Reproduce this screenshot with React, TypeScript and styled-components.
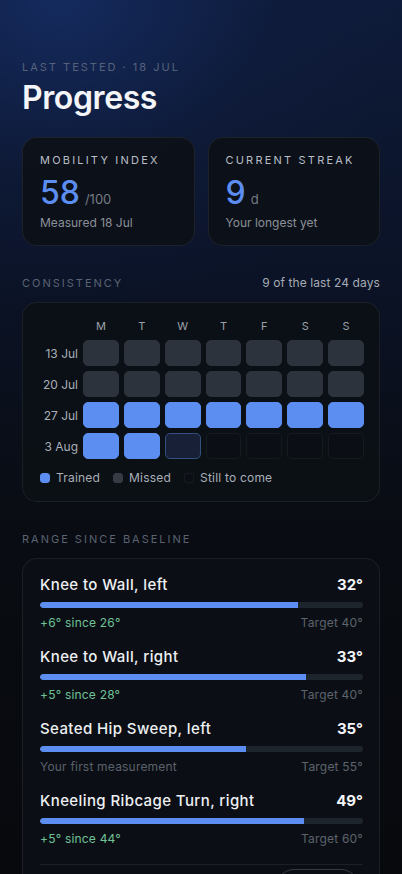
import styled, { createGlobalStyle } from "styled-components";

const GlobalStyle = createGlobalStyle`
  * { box-sizing: border-box; }
  body {
    margin: 0;
    background: #080b10;
    font-family: Inter, "Noto Sans", sans-serif;
    color: #eef0f3;
  }
`;

const Page = styled.div`
  height: 874px;
  padding: 60px 22px 0 22px;
  background:
    radial-gradient(ellipse 120% 45% at 15% 0%, rgba(22, 45, 100, 0.85) 0%, rgba(16, 30, 66, 0.4) 45%, rgba(10, 13, 20, 0) 80%),
    linear-gradient(180deg, #0d1a38 0%, #0b1224 35%, #090c12 60%, #07090d 100%);
  overflow: hidden;
`;

const Eyebrow = styled.div`
  font-size: 11px;
  line-height: 14px;
  letter-spacing: 2px;
  text-transform: uppercase;
  color: #56627c;
`;

const Title = styled.h1`
  margin: 4px 0 0 0;
  font-size: 32px;
  line-height: 40px;
  font-weight: 600;
  letter-spacing: -0.4px;
  color: #f3f5f8;
`;

const StatGrid = styled.div`
  display: grid;
  grid-template-columns: 1fr 1fr;
  gap: 13px;
  margin-top: 19px;
`;

const Card = styled.div`
  background: rgba(12, 16, 22, 0.88);
  border: 1px solid rgba(255, 255, 255, 0.07);
  border-radius: 15px;
`;

const StatCard = styled(Card)`
  padding: 15px 17px 16px 17px;
  height: 109px;
`;

const StatLabel = styled.div`
  font-size: 11px;
  line-height: 14px;
  letter-spacing: 2.2px;
  text-transform: uppercase;
  color: #b9bec6;
`;

const StatValueRow = styled.div`
  display: flex;
  align-items: baseline;
  margin-top: 8px;
  height: 36px;
`;

const StatValue = styled.span`
  font-size: 32px;
  line-height: 36px;
  font-weight: 500;
  color: #5b8ef0;
`;

const StatUnit = styled.span`
  font-size: 13px;
  margin-left: 5px;
  color: #757b85;
`;

const StatNote = styled.div`
  margin-top: 4px;
  font-size: 12px;
  line-height: 16px;
  color: #8a9099;
`;

const SectionHead = styled.div`
  display: flex;
  justify-content: space-between;
  align-items: center;
  margin-top: 30px;
  margin-bottom: 12px;
`;

const SectionLabel = styled.div`
  font-size: 11px;
  line-height: 14px;
  letter-spacing: 2px;
  text-transform: uppercase;
  color: #5a6372;
`;

const SectionMeta = styled.div`
  font-size: 12px;
  line-height: 14px;
  letter-spacing: 0.1px;
  color: #a6acb5;
`;

const CalendarCard = styled(Card)`
  background: rgba(12, 16, 22, 0.92);
  padding: 16px 15px 16px 17px;
`;

const CalGrid = styled.div`
  display: grid;
  grid-template-columns: 38px repeat(7, 1fr);
  column-gap: 5px;
  row-gap: 5px;
`;

const DayHead = styled.div`
  font-size: 11px;
  line-height: 14px;
  text-align: center;
  color: #9ca2aa;
  margin-bottom: 2px;
`;

const WeekLabel = styled.div`
  font-size: 12px;
  text-align: right;
  align-self: center;
  color: #a9afb8;
  white-space: nowrap;
`;

type CellState = "trained" | "missed" | "today" | "future";

const cellBg: Record<CellState, string> = {
  trained: "#5b8ef0",
  missed: "#2d333c",
  today: "#172036",
  future: "#0b0f15",
};

const cellBorder: Record<CellState, string> = {
  trained: "#5b8ef0",
  missed: "#2d333c",
  today: "#33507f",
  future: "rgba(255, 255, 255, 0.05)",
};

const Cell = styled.div<{ $state: CellState }>`
  height: 26px;
  border-radius: 5px;
  background: ${(p) => cellBg[p.$state]};
  border: 1px solid ${(p) => cellBorder[p.$state]};
`;

const Legend = styled.div`
  display: flex;
  align-items: center;
  gap: 13px;
  margin-top: 12px;
`;

const LegendItem = styled.div`
  display: flex;
  align-items: center;
  gap: 6px;
  font-size: 12px;
  line-height: 14px;
  letter-spacing: 0.2px;
  color: #a9afb8;
`;

const Swatch = styled.span<{ $state: CellState }>`
  width: 10px;
  height: 10px;
  border-radius: 3px;
  background: ${(p) => (p.$state === "missed" ? "#363b44" : cellBg[p.$state])};
  border: 1px solid ${(p) => (p.$state === "missed" ? "#363b44" : cellBorder[p.$state])};
`;

const RangeCard = styled(Card)`
  background: rgba(12, 16, 22, 0.95);
  padding: 16px 16px 0 17px;
`;

const RangeItem = styled.div`
  padding-bottom: 16px;
`;

const RangeTop = styled.div`
  display: flex;
  justify-content: space-between;
  align-items: center;
  font-size: 15px;
  line-height: 20px;
`;

const RangeName = styled.span`
  font-weight: 500;
  letter-spacing: 0.4px;
  color: #eef0f3;
`;

const RangeValue = styled.span`
  font-weight: 700;
  color: #f3f5f8;
`;

const Track = styled.div`
  margin-top: 7px;
  height: 6px;
  border-radius: 3px;
  background: #1e242c;
  overflow: hidden;
`;

const Fill = styled.div`
  height: 100%;
  border-radius: 3px 0 0 3px;
  background: #5b8ef0;
`;

const RangeBottom = styled.div`
  display: flex;
  justify-content: space-between;
  margin-top: 7px;
  font-size: 12px;
  line-height: 16px;
  letter-spacing: 0.2px;
`;

const Delta = styled.span<{ $first?: boolean }>`
  color: ${(p) => (p.$first ? "#5b616b" : "#70c196")};
`;

const TargetText = styled.span`
  color: #5d636c;
`;

const Footer = styled.div`
  display: flex;
  justify-content: flex-end;
  border-top: 1px solid rgba(255, 255, 255, 0.07);
  margin-top: 1px;
  padding: 4px 4px 14px 0;
`;

const GhostButton = styled.button`
  font-family: inherit;
  font-size: 12px;
  line-height: 14px;
  padding: 22px 0 0 0;
  color: #c9cdd3;
  background: transparent;
  border: 1px solid rgba(255, 255, 255, 0.18);
  border-radius: 18px;
  height: 44px;
  width: 83px;
`;

const days = ["M", "T", "W", "T", "F", "S", "S"];

const weeks: { label: string; cells: CellState[] }[] = [
  { label: "13 Jul", cells: Array(7).fill("missed") },
  { label: "20 Jul", cells: Array(7).fill("missed") },
  { label: "27 Jul", cells: Array(7).fill("trained") },
  { label: "3 Aug", cells: ["trained", "trained", "today", "future", "future", "future", "future"] },
];

const ranges = [
  { name: "Knee to Wall, left", value: 32, target: 40, delta: "+6° since 26°" },
  { name: "Knee to Wall, right", value: 33, target: 40, delta: "+5° since 28°" },
  { name: "Seated Hip Sweep, left", value: 35, target: 55, delta: null },
  { name: "Kneeling Ribcage Turn, right", value: 49, target: 60, delta: "+5° since 44°" },
];

export default function App() {
  return (
    <Page>
      <GlobalStyle />
      <Eyebrow>Last tested · 18 Jul</Eyebrow>
      <Title>Progress</Title>

      <StatGrid>
        <StatCard>
          <StatLabel>Mobility index</StatLabel>
          <StatValueRow>
            <StatValue>58</StatValue>
            <StatUnit>/100</StatUnit>
          </StatValueRow>
          <StatNote>Measured 18 Jul</StatNote>
        </StatCard>
        <StatCard>
          <StatLabel>Current streak</StatLabel>
          <StatValueRow>
            <StatValue>9</StatValue>
            <StatUnit>d</StatUnit>
          </StatValueRow>
          <StatNote>Your longest yet</StatNote>
        </StatCard>
      </StatGrid>

      <SectionHead>
        <SectionLabel>Consistency</SectionLabel>
        <SectionMeta>9 of the last 24 days</SectionMeta>
      </SectionHead>
      <CalendarCard>
        <CalGrid>
          <span />
          {days.map((d, i) => (
            <DayHead key={i}>{d}</DayHead>
          ))}
          {weeks.map((w) => [
            <WeekLabel key={w.label}>{w.label}</WeekLabel>,
            ...w.cells.map((c, i) => <Cell key={w.label + i} $state={c} />),
          ])}
        </CalGrid>
        <Legend>
          <LegendItem>
            <Swatch $state="trained" />
            Trained
          </LegendItem>
          <LegendItem>
            <Swatch $state="missed" />
            Missed
          </LegendItem>
          <LegendItem>
            <Swatch $state="future" />
            Still to come
          </LegendItem>
        </Legend>
      </CalendarCard>

      <SectionHead>
        <SectionLabel>Range since baseline</SectionLabel>
      </SectionHead>
      <RangeCard>
        {ranges.map((r) => (
          <RangeItem key={r.name}>
            <RangeTop>
              <RangeName>{r.name}</RangeName>
              <RangeValue>{r.value}°</RangeValue>
            </RangeTop>
            <Track>
              <Fill style={{ width: `${(r.value / r.target) * 100}%` }} />
            </Track>
            <RangeBottom>
              {r.delta ? <Delta>{r.delta}</Delta> : <Delta $first>Your first measurement</Delta>}
              <TargetText>Target {r.target}°</TargetText>
            </RangeBottom>
          </RangeItem>
        ))}
        <Footer>
          <GhostButton>Retest</GhostButton>
        </Footer>
      </RangeCard>
    </Page>
  );
}
